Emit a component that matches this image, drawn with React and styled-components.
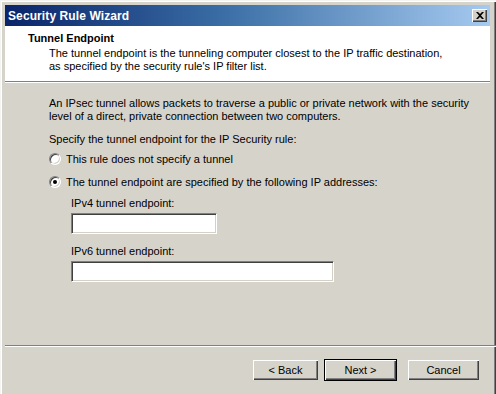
import React from 'react'
import styled, { createGlobalStyle } from 'styled-components'

const Global = createGlobalStyle`
html, body { margin: 0; padding: 0; background: #f2f2f2; }
body { font-family: "Liberation Sans", Arial, sans-serif; font-size: 11px; color: #000; }
`
const Frame = styled.div`
width: 496px; height: 394px; box-sizing: border-box; background: #d6d3cb;
padding: 4px 6px 0 4px; display: flex; flex-direction: column;
border-top: 1px solid #f4f4f2; border-left: 1px solid #f4f4f2;
box-shadow: inset 1px 1px 0 #ffffff, inset -1px 0 0 #404040, inset -2px 0 0 #808080;`
const TitleBar = styled.div`
height: 21px; display: flex; align-items: center; justify-content: space-between;
padding: 0 3px 0 3px; background: linear-gradient(to right, #0a246a 0%, #3a6ea5 45%, #a6caf0 100%);`
const Title = styled.span`
color: #fff; font-weight: bold; font-size: 12px; letter-spacing: 0.1px;`
const CloseBtn = styled.div`
width: 15px; height: 13px; background: #d4d0c8; display: flex; align-items: center; justify-content: center;
box-shadow: inset 1px 1px 0 #ffffff, inset -1px -1px 0 #404040, inset -2px -2px 0 #808080;`
const Header = styled.div`
background: #fff; height: 56px; box-sizing: border-box; padding: 6px 0 0 23px;
border-bottom: 1px solid #808080; box-shadow: 0 1px 0 #ffffff;`
const HeaderTitle = styled.div`
font-weight: bold; font-size: 11px; margin-bottom: 3px;`
const HeaderText = styled.div`
padding-left: 21px; line-height: 13px;`
const Body = styled.div`
flex: 1; padding: 15px 0 0 44px; display: flex; flex-direction: column;`
const Para = styled.p`
margin: 0 0 ${p => p.$mb || 10}px; line-height: 13px; white-space: nowrap;`
const Radio = styled.label`
display: flex; align-items: center; gap: 5px; height: 13px; margin-bottom: ${p => p.$mb || 10}px;`
const Dot = styled.span`
width: 12px; height: 12px; border-radius: 50%; box-sizing: border-box; background: #fff;
border: 1px solid; border-color: #808080 #ffffff #ffffff #808080;
box-shadow: inset 1px 1px 0 #404040, inset -1px -1px 0 #d4d0c8;
display: flex; align-items: center; justify-content: center;
&::after { content: ''; width: 4px; height: 4px; border-radius: 50%; background: ${p => p.$on ? '#000' : 'transparent'}; }`
const Group = styled.div`
padding-left: 22px; display: flex; flex-direction: column;`
const FieldLabel = styled.div`
line-height: 13px; margin-bottom: 3px;`
const Input = styled.div`
width: ${p => p.$w}px; height: 21px; box-sizing: border-box; background: #fff; margin-bottom: ${p => p.$mb || 0}px;
border: 1px solid; border-color: #808080 #ffffff #ffffff #808080;
box-shadow: inset 1px 1px 0 #404040, inset -1px -1px 0 #d4d0c8;`
const Sep = styled.div`
height: 1px; background: #808080; border-bottom: 1px solid #fff; margin-right: -6px;`
const Footer = styled.div`
height: 47px; display: flex; justify-content: flex-end; align-items: flex-start; padding: 12px 10px 0 0; box-sizing: border-box;`
const Button = styled.div`
width: ${p => p.$w}px; height: 22px; box-sizing: border-box; margin-left: ${p => p.$ml}px;
display: flex; align-items: center; justify-content: center; background: #d6d3cb;
border: 1px solid ${p => p.$def ? '#000' : 'transparent'};
box-shadow: inset 1px 1px 0 #ffffff, inset -1px -1px 0 #404040, inset -2px -2px 0 #808080;`

export default function App() {
  return (
    <>
      <Global />
      <Frame>
        <TitleBar>
          <Title>Security Rule Wizard</Title>
          <CloseBtn>
            <svg width="8" height="7" viewBox="0 0 8 7">
              <path d="M0 0h2l2 2 2-2h2L5 3.5 8 7H6L4 5 2 7H0l3-3.5z" fill="#000" />
            </svg>
          </CloseBtn>
        </TitleBar>
        <Header>
          <HeaderTitle>Tunnel Endpoint</HeaderTitle>
          <HeaderText>
            The tunnel endpoint is the tunneling computer closest to the IP traffic destination,<br />
            as specified by the security rule's IP filter list.
          </HeaderText>
        </Header>
        <Body>
          <Para>An IPsec tunnel allows packets to traverse a public or private network with the security<br />level of a direct, private connection between two computers.</Para>
          <Para $mb={6}>Specify the tunnel endpoint for the IP Security rule:</Para>
          <Radio><Dot /> This rule does not specify a tunnel</Radio>
          <Radio $mb={9}><Dot $on /> The tunnel endpoint are specified by the following IP addresses:</Radio>
          <Group>
            <FieldLabel>IPv4 tunnel endpoint:</FieldLabel>
            <Input $w={146} $mb={11} />
            <FieldLabel>IPv6 tunnel endpoint:</FieldLabel>
            <Input $w={263} />
          </Group>
        </Body>
        <Sep />
        <Footer>
          <Button $w={67} $ml={0}>&lt; Back</Button>
          <Button $w={73} $ml={5} $def>Next &gt;</Button>
          <Button $w={73} $ml={10}>Cancel</Button>
        </Footer>
      </Frame>
    </>
  )
}
